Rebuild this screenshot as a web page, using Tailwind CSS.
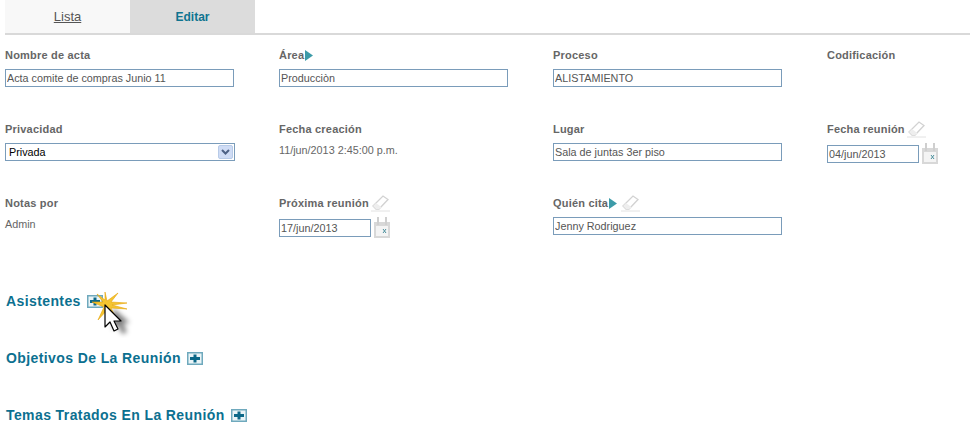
<!DOCTYPE html>
<html lang="es">
<head>
  <meta charset="UTF-8">
  <title>Editar acta</title>
  <script src="https://cdn.jsdelivr.net/npm/@tailwindcss/browser@4"></script>
</head>
<body class="bg-white font-['Liberation_Sans',Arial,sans-serif] overflow-hidden">
  <div class="relative h-[433px] w-[970px] overflow-hidden">

    <!-- tabs -->
    <div class="ml-[5px] flex h-[35px] border-b-2 border-[#d9d9d9]">
      <a class="flex w-[125px] items-center justify-center bg-[#f8f8f8] text-[13px] text-[#555] underline">Lista</a>
      <a class="flex w-[125px] items-center justify-center bg-[#dcdcdc] text-[12px] font-bold text-[#0f7490]">Editar</a>
    </div>

    <!-- form -->
    <div class="ml-[5px] grid grid-cols-[274px_274px_274px_143px] auto-rows-[74px] pt-[13px]">

      <div>
        <div class="flex h-[14px] items-center text-[11px] font-bold tracking-[0.2px] text-[#666]">Nombre de acta</div>
        <input value="Acta comite de compras Junio 11" class="mt-[7px] h-[18px] w-[229px] border border-[#7a9cba] px-[1px] text-[10.8px] text-[#555]">
      </div>
      <div>
        <div class="flex h-[14px] items-center text-[11px] font-bold tracking-[0.2px] text-[#666]">Área<svg class="ml-[1px] h-[11px] w-[8px]" viewBox="0 0 8 11"><path d="M0 0l8 5.500-8 5.500z" fill="#3c9ba8"/></svg></div>
        <input value="Producciòn" class="mt-[7px] h-[18px] w-[229px] border border-[#7a9cba] px-[1px] text-[10.8px] text-[#555]">
      </div>
      <div>
        <div class="flex h-[14px] items-center text-[11px] font-bold tracking-[0.2px] text-[#666]">Proceso</div>
        <input value="ALISTAMIENTO" class="mt-[7px] h-[18px] w-[229px] border border-[#7a9cba] px-[1px] text-[10.8px] text-[#555]">
      </div>
      <div>
        <div class="flex h-[14px] items-center text-[11px] font-bold tracking-[0.2px] text-[#666]">Codificación</div>
      </div>

      <div>
        <div class="flex h-[14px] items-center text-[11px] font-bold tracking-[0.2px] text-[#666]">Privacidad</div>
        <div class="mt-[7px] flex h-[18px] w-[230px] items-center justify-between border border-[#7a9cba] pl-[3px] pr-[1px] text-[10.8px] text-black">
          <span class="pt-[1px]">Privada</span>
          <span class="flex h-[14px] w-[15px] items-center justify-center rounded-[2px] border border-[#b8cbe8] bg-[#cfdcf5]">
            <svg class="h-[6px] w-[9px]" viewBox="0 0 9 6"><path d="M1 1l3.500 3.500L8 1" fill="none" stroke="#4d6185" stroke-width="2"/></svg>
          </span>
        </div>
      </div>
      <div>
        <div class="flex h-[14px] items-center text-[11px] font-bold tracking-[0.2px] text-[#666]">Fecha creación</div>
        <div class="mt-[6px] text-[10.8px] text-[#666]">11/jun/2013 2:45:00 p.m.</div>
      </div>
      <div>
        <div class="flex h-[14px] items-center text-[11px] font-bold tracking-[0.2px] text-[#666]">Lugar</div>
        <input value="Sala de juntas 3er piso" class="mt-[7px] h-[18px] w-[229px] border border-[#7a9cba] px-[1px] text-[10.8px] text-[#555]">
      </div>
      <div>
        <div class="flex h-[14px] items-center text-[11px] font-bold tracking-[0.2px] text-[#666]">Fecha reunión
          <svg class="ml-[2px] h-[18px] w-[19px] shrink-0" viewBox="0 0 19 18"><path d="M2 12L12 2l5 3.500L8 15H5z" fill="#fff" stroke="#d2d2d2" stroke-width="1.300"/><path d="M5 9l6 4.500-3 1.500H5l-3-3z" fill="#eeeeee"/><path d="M0 17h19" stroke="#e2e2e2"/></svg>
        </div>
        <div class="mt-[7px] flex items-center">
          <input value="04/jun/2013" class="h-[18px] w-[92px] border border-[#7a9cba] px-[1px] text-[10.8px] text-[#555]">
          <svg class="ml-[3px] h-[21px] w-[16px]" viewBox="0 0 16 21"><path d="M0 5h16v16H0z" fill="#d8d8d8"/><path d="M2 9h12v10H2z" fill="#f4f4f4"/><path d="M3 0h2v8H3zM11 0h2v8h-2z" fill="#cfcfcf"/><path d="M9 12l3 4M12 12l-3 4" stroke="#4a8f9c"/></svg>
        </div>
      </div>

      <div>
        <div class="flex h-[14px] items-center text-[11px] font-bold tracking-[0.2px] text-[#666]">Notas por</div>
        <div class="mt-[6px] text-[10.8px] text-[#666]">Admin</div>
      </div>
      <div>
        <div class="flex h-[14px] items-center text-[11px] font-bold tracking-[0.2px] text-[#666]">Próxima reunión
          <svg class="ml-[2px] h-[18px] w-[19px] shrink-0" viewBox="0 0 19 18"><path d="M2 12L12 2l5 3.500L8 15H5z" fill="#fff" stroke="#d2d2d2" stroke-width="1.300"/><path d="M5 9l6 4.500-3 1.500H5l-3-3z" fill="#eeeeee"/><path d="M0 17h19" stroke="#e2e2e2"/></svg>
        </div>
        <div class="mt-[7px] flex items-center">
          <input value="17/jun/2013" class="h-[18px] w-[92px] border border-[#7a9cba] px-[1px] text-[10.8px] text-[#555]">
          <svg class="ml-[3px] h-[21px] w-[16px]" viewBox="0 0 16 21"><path d="M0 5h16v16H0z" fill="#d8d8d8"/><path d="M2 9h12v10H2z" fill="#f4f4f4"/><path d="M3 0h2v8H3zM11 0h2v8h-2z" fill="#cfcfcf"/><path d="M9 12l3 4M12 12l-3 4" stroke="#4a8f9c"/></svg>
        </div>
      </div>
      <div>
        <div class="flex h-[14px] items-center text-[11px] font-bold tracking-[0.2px] text-[#666]">Quién cita<svg class="ml-[1px] h-[11px] w-[8px]" viewBox="0 0 8 11"><path d="M0 0l8 5.500-8 5.500z" fill="#3c9ba8"/></svg>
          <svg class="ml-[4px] h-[18px] w-[19px] shrink-0" viewBox="0 0 19 18"><path d="M2 12L12 2l5 3.500L8 15H5z" fill="#fff" stroke="#d2d2d2" stroke-width="1.300"/><path d="M5 9l6 4.500-3 1.500H5l-3-3z" fill="#eeeeee"/><path d="M0 17h19" stroke="#e2e2e2"/></svg>
        </div>
        <input value="Jenny Rodriguez" class="mt-[7px] h-[18px] w-[229px] border border-[#7a9cba] px-[1px] text-[10.8px] text-[#555]">
      </div>
      <div></div>
    </div>

    <!-- sections -->
    <div class="ml-[6px] mt-[23px] flex flex-col gap-[40px]">
      <div class="flex h-[17px] items-center text-[14px] font-bold tracking-[0.4px] text-[#0c7090]">Asistentes
        <svg class="ml-[6px] h-[13px] w-[16px]" viewBox="0 0 16 13"><path d="M.75.75h14.500v11.500H.75z" fill="#eaf4f7" stroke="#6fa9bd" stroke-width="1.500"/><path d="M6.500 2.500h3V5H13v3H9.500v2.500h-3V8H3V5h3.500z" fill="#0c6888"/></svg>
      </div>
      <div class="flex h-[17px] items-center text-[14px] font-bold tracking-[0.4px] text-[#0c7090]">Objetivos De La Reunión
        <svg class="ml-[6px] h-[13px] w-[16px]" viewBox="0 0 16 13"><path d="M.75.75h14.500v11.500H.75z" fill="#eaf4f7" stroke="#6fa9bd" stroke-width="1.500"/><path d="M6.500 2.500h3V5H13v3H9.500v2.500h-3V8H3V5h3.500z" fill="#0c6888"/></svg>
      </div>
      <div class="flex h-[17px] items-center text-[14px] font-bold tracking-[0.4px] text-[#0c7090]">Temas Tratados En La Reunión
        <svg class="ml-[6px] h-[13px] w-[16px]" viewBox="0 0 16 13"><path d="M.75.75h14.500v11.500H.75z" fill="#eaf4f7" stroke="#6fa9bd" stroke-width="1.500"/><path d="M6.500 2.500h3V5H13v3H9.500v2.500h-3V8H3V5h3.500z" fill="#0c6888"/></svg>
      </div>
    </div>

    <!-- click highlight and cursor over the first plus button -->
    <svg class="absolute left-[90px] top-[288px] h-[50px] w-[48px]" viewBox="0 0 48 50">
      <defs><filter id="blur" x="-50%" y="-50%" width="200%" height="200%"><feGaussianBlur stdDeviation="2.500"/></filter></defs>
      <path d="M15 17v22l5-5 4 9 5-2-4-9h7z" fill="#000" opacity=".5" filter="url(#blur)" transform="translate(8 3)"/>
      <path d="M15 4l2 9 11-8-7 9 16 1-15 2 15 4-16-1 3 6-6-5-10 11 6-13-12-5 11 0-6-8 8 6z" fill="#f4c430" stroke="#e5a50a" stroke-width=".6" stroke-linejoin="round"/>
      <path d="M15 17v22l5-5 4 9 4-2-4-8h7z" fill="#fff" stroke="#000" stroke-width="1.200" stroke-linejoin="round"/>
    </svg>
  </div>
</body>
</html>
